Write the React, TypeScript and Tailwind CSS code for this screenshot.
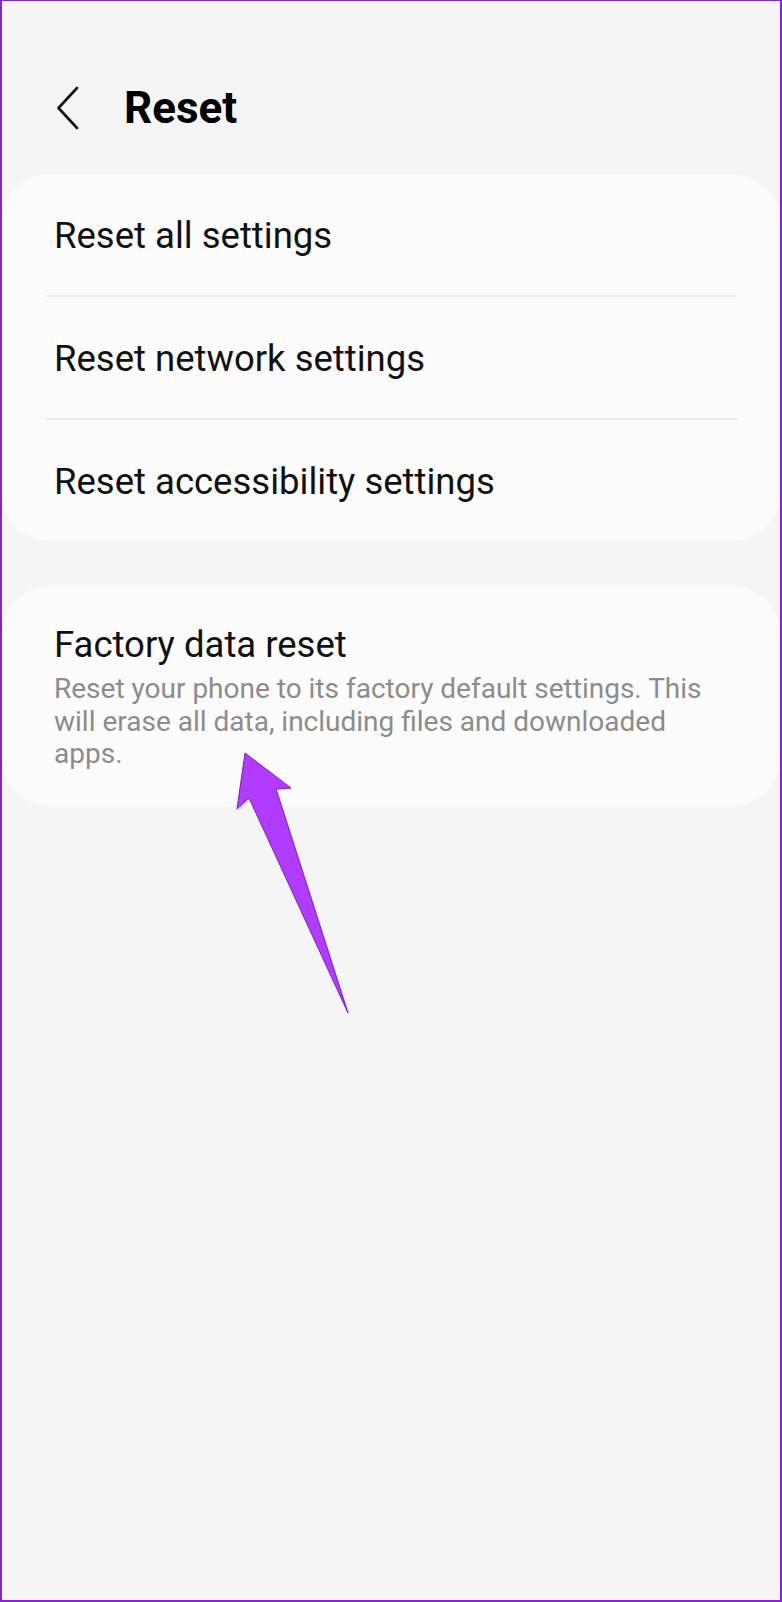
const items = ['Reset all settings', 'Reset network settings', 'Reset accessibility settings']

export default function App() {
  return (
    <div className="relative w-[782px] h-[1602px] overflow-hidden border-l-2 border-t border-r-2 border-b-2 border-[#8424d6] bg-[#f5f5f5] font-['Roboto',sans-serif]">
      {/* header */}
      <div className="flex items-center h-[173px] pt-[40px]">
        <svg className="ml-[54px]" width="24" height="44" viewBox="0 0 24 44" fill="none">
          <path d="M21 2 L2.5 22 L21 42" stroke="#111" strokeWidth="2.6" strokeLinecap="round" strokeLinejoin="round" />
        </svg>
        <h1 className="ml-[44px] text-[44px] font-bold text-black leading-none">Reset</h1>
      </div>

      <div className="bg-[#fcfcfc] rounded-[48px]">
        {items.map((label, i) => (
          <div key={label}>
            {i > 0 && <div className="mx-[43px] h-[2px] bg-[#ebebeb]" />}
            <div className="flex items-center h-[121px] pt-[4px] pl-[52px] text-[36.5px] text-[#111]">{label}</div>
          </div>
        ))}
      </div>

      <div className="mt-[45px] bg-[#fcfcfc] rounded-[48px] pl-[52px] pt-[37px] pb-[35px]">
        <div className="text-[36.5px] text-[#111] leading-[44px]">Factory data reset</div>
        <p className="mt-[6px] w-[668px] text-[28px] leading-[32.5px] text-[#8c8c8c]">
          Reset your phone to its factory default settings. This will erase all data, including files and downloaded apps.
        </p>
      </div>

      {/* annotation arrow */}
      <svg className="absolute left-0 top-0 pointer-events-none" width="782" height="1602" viewBox="0 0 782 1602">
        <polygon
          points="243,752 289,787 274,788 346,1012 247,797 235,808"
          fill="#000"
          opacity="0.12"
          transform="translate(2,2)"
        />
        <polygon
          points="243,752 289,787 274,788 346,1012 247,797 235,808"
          fill="#b13cff"
          stroke="#7b1fb3"
          strokeWidth="1"
          strokeLinejoin="round"
        />
      </svg>
    </div>
  )
}
